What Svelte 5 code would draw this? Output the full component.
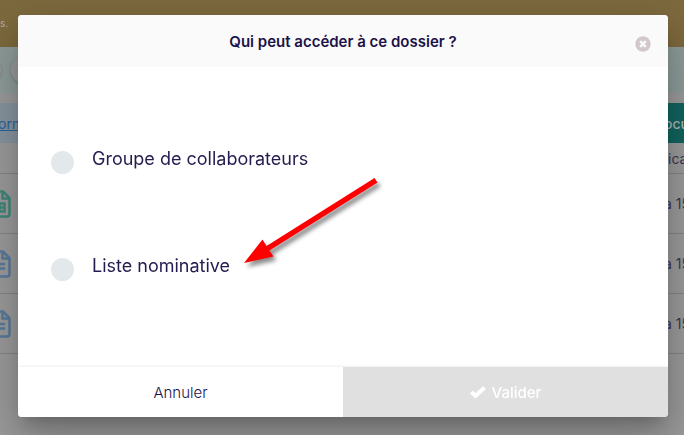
<script>
  let choice = $state("");
  let open = $state(true);

  const choices = [
    { value: "group", label: "Groupe de collaborateurs" },
    { value: "list", label: "Liste nominative" },
  ];

  const rows = [
    { type: "sheet", date: "a 15" },
    { type: "doc", date: "a 15" },
    { type: "doc", date: "a 15" },
  ];

  function close() {
    open = false;
  }
</script>

<div class="page">
  <div class="banner">s.</div>
  <div class="toolbar">
    <span class="round"></span>
    <span class="round"></span>
  </div>
  <div class="tabs">
    <a href="#informations">orm</a>
    <span class="tab-active">ocu</span>
  </div>
  <div class="row head"><span></span><span class="date">ica</span></div>
  {#each rows as row}
    <div class="row">
      <svg class="file {row.type}" viewBox="0 0 22 28" aria-hidden="true">
        <path d="M4 1.5h10l6.5 6.5v16q0 2.500-2.500 2.500h-14q-2.500 0-2.500-2.500v-20q0-2.500 2.500-2.500z M13.500 2v6.500h7" />
        {#if row.type === "sheet"}
          <path d="M5 13.500h10.500v8h-10.500z M5 17.500h10.500 M10.500 13.500v8" />
        {:else}
          <path d="M6 14h10 M6 18.500h10" />
        {/if}
      </svg>
      <span class="date">{row.date}</span>
    </div>
  {/each}
</div>

{#if open}
  <div class="backdrop">
    <div class="modal" role="dialog" aria-modal="true" aria-labelledby="modal-title">
      <header>
        <h1 id="modal-title">Qui peut accéder à ce dossier ?</h1>
        <button class="close" aria-label="Fermer" onclick={close}>
          <svg viewBox="0 0 16 16">
            <circle cx="8" cy="8" r="7.700" />
            <path d="M5.200 5.200l5.600 5.600m0-5.600l-5.600 5.600" />
          </svg>
        </button>
      </header>

      <div class="choices">
        {#each choices as item}
          <label>
            <input type="radio" name="access" value={item.value} bind:group={choice} />
            <span>{item.label}</span>
          </label>
        {/each}
        <svg class="arrow" viewBox="0 0 140 92" aria-hidden="true">
          <path d="M2 86L20.500 62.500L24.500 69L132.500 1L135.500 5.500L27.500 73.500L31.500 79.500z" />
        </svg>
      </div>

      <footer>
        <button class="cancel" onclick={close}>Annuler</button>
        <button class="confirm" disabled={!choice}>
          <svg viewBox="0 0 16 12" aria-hidden="true">
            <path d="M1.500 6l4 4l9-8.500" />
          </svg>
          Valider
        </button>
      </footer>
    </div>
  </div>
{/if}

<style>
  :global(body) {
    margin: 0;
    background: #9b9b9b;
    font-family: Inter, sans-serif;
  }

  .page {
    height: 100vh;
    overflow: hidden;
    color: #3b3654;
    font-size: 14px;
  }

  .banner {
    height: 47px;
    line-height: 47px;
    background: #7e6a3e;
    color: #b5ae9e;
    font-size: 10px;
  }

  .toolbar {
    display: flex;
    align-items: center;
    gap: 10px;
    height: 46px;
    margin-bottom: 10px;
    background: #8f9d9b;
  }

  .round {
    width: 28px;
    height: 28px;
    border-radius: 50%;
    background: #9b9b9b;
    box-shadow: 0 1px 3px rgba(0, 0, 0, 0.2);
  }

  .round:first-child {
    margin-left: -27px;
  }

  .tabs {
    display: flex;
    justify-content: space-between;
    height: 40px;
    line-height: 42px;
    background: #8895a0;
  }

  .tabs a {
    margin-left: -2px;
    color: #2a629a;
  }

  .tab-active {
    width: 20px;
    background: #11645f;
    color: #a9b6b5;
    font-weight: 500;
  }

  .row {
    display: flex;
    align-items: center;
    justify-content: space-between;
    box-sizing: border-box;
    height: 60px;
    border-bottom: 1px solid #858585;
  }

  .row.head {
    height: 31px;
  }

  .date {
    width: 20px;
    white-space: nowrap;
  }

  .row.head .date {
    width: 16px;
  }

  .file {
    width: 22px;
    height: 28px;
    margin-left: -11px;
    fill: none;
    stroke: #587b9b;
    stroke-width: 2.5;
  }

  .file.sheet {
    stroke: #42877a;
  }

  .backdrop {
    position: fixed;
    inset: 0;
    padding: 15px 16px 18px 18px;
  }

  .modal {
    overflow: hidden;
    border-radius: 4px;
    background: #fff;
    color: #1c1249;
    box-shadow: 0 11px 15px -7px rgba(0, 0, 0, 0.2), 0 9px 46px 8px rgba(0, 0, 0, 0.12),
      0 24px 38px 3px rgba(0, 0, 0, 0.14);
  }

  header {
    display: flex;
    align-items: center;
    justify-content: center;
    position: relative;
    height: 52px;
    background: #fafafa;
  }

  h1 {
    margin: 0;
    font-size: 15px;
    font-weight: 600;
  }

  button {
    border: 0;
    font: inherit;
    cursor: pointer;
  }

  .close {
    position: absolute;
    right: 17px;
    top: 21px;
    width: 16px;
    height: 16px;
    padding: 0;
    background: none;
  }

  .close svg {
    display: block;
    fill: #d2c8c9;
    stroke: #fafafa;
    stroke-width: 2.5;
  }

  .close circle {
    stroke: none;
  }

  .choices {
    display: flex;
    flex-direction: column;
    gap: 83px;
    position: relative;
    padding: 80px 33px 89px;
  }

  label {
    display: flex;
    align-items: flex-start;
    gap: 18px;
    height: 24px;
    color: #251b50;
    font-size: 18px;
    line-height: 24px;
  }

  input {
    appearance: none;
    width: 23px;
    height: 23px;
    margin: 4px 0 0;
    border-radius: 50%;
    background: #e3e9eb;
  }

  input:checked {
    background: #105b56;
  }

  .arrow {
    position: absolute;
    left: 224px;
    top: 110px;
    width: 140px;
    height: 92px;
    overflow: visible;
    fill: #f00;
    filter: drop-shadow(3px 4px 2px rgba(0, 0, 0, 0.45));
    pointer-events: none;
  }

  footer {
    display: flex;
    box-shadow: 0 0 3px rgba(0, 0, 0, 0.12);
  }

  footer button {
    flex: 1;
    display: flex;
    align-items: center;
    justify-content: center;
    gap: 6px;
    height: 50px;
    font-size: 15px;
  }

  .cancel {
    background: #fff;
    color: #1c1249;
    font-weight: 300;
  }

  .confirm {
    background: #e0e0e0;
    color: #fff;
    font-weight: 500;
  }

  .confirm svg {
    width: 16px;
    height: 12px;
    fill: none;
    stroke: #fff;
    stroke-width: 4;
  }
</style>
